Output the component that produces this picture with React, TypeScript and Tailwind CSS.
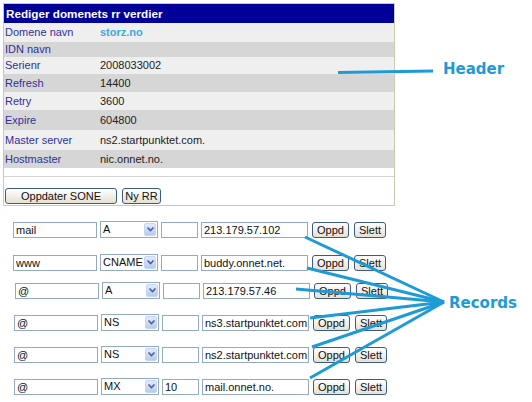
import React from "react";

const rows: { label: string; value: string; h: string; bg: string; special?: boolean }[] = [
  { label: "Domene navn", value: "storz.no", h: "h-[19px]", bg: "bg-[#efefef]", special: true },
  { label: "IDN navn", value: "", h: "h-[15px]", bg: "bg-[#d6d6d6]" },
  { label: "Serienr", value: "2008033002", h: "h-[17px]", bg: "bg-[#efefef]" },
  { label: "Refresh", value: "14400", h: "h-[18px]", bg: "bg-[#d6d6d6]" },
  { label: "Retry", value: "3600", h: "h-[18px]", bg: "bg-[#efefef]" },
  { label: "Expire", value: "604800", h: "h-[20px]", bg: "bg-[#d6d6d6]" },
  { label: "Master server", value: "ns2.startpunktet.com.", h: "h-[20px]", bg: "bg-[#efefef]" },
  { label: "Hostmaster", value: "nic.onnet.no.", h: "h-[18px]", bg: "bg-[#d6d6d6]" },
];

const records: { name: string; type: string; ttl: string; data: string; cls: string }[] = [
  { name: "mail", type: "A", ttl: "", data: "213.179.57.102", cls: "mt-[16px] pl-[13px]" },
  { name: "www", type: "CNAME", ttl: "", data: "buddy.onnet.net.", cls: "mt-[17px] pl-[13px]" },
  { name: "@", type: "A", ttl: "", data: "213.179.57.46", cls: "mt-[12px] pl-[15px]" },
  { name: "@", type: "NS", ttl: "", data: "ns3.startpunktet.com", cls: "mt-[16px] pl-[14px]" },
  { name: "@", type: "NS", ttl: "", data: "ns2.startpunktet.com", cls: "mt-[16px] pl-[14px]" },
  { name: "@", type: "MX", ttl: "10", data: "mail.onnet.no.", cls: "mt-[16px] pl-[14px]" },
];

function XpButton({ label, w }: { label: string; w: string }) {
  return (
    <div
      className={`${w} h-[16px] shrink-0 border border-[#3c5a86] rounded-[3px] bg-linear-to-b from-white to-[#e4e1d4] text-[11px] leading-none flex items-center justify-center text-[#111]`}
    >
      {label}
    </div>
  );
}

function Field({ value, w }: { value: string; w: string }) {
  return (
    <div
      className={`${w} h-[16px] shrink-0 border border-[#94aac4] bg-white text-[11px] leading-none flex items-center pl-[2px] overflow-hidden whitespace-nowrap text-[#111]`}
    >
      {value}
    </div>
  );
}

function Combo({ value }: { value: string }) {
  return (
    <div className="w-[58px] h-[17px] shrink-0 border border-[#94aac4] bg-white flex items-start -mt-[1px]">
      <div className="flex-1 min-w-0 pl-[2px] pt-[1px] text-[11px] leading-[13px] text-[#111] whitespace-nowrap">
        {value}
      </div>
      <div className="w-[12px] h-[13px] mt-[1px] mr-[1px] shrink-0 rounded-[2px] border border-[#c4d4f4] bg-linear-to-b from-[#e2ebfd] to-[#b4cbf5] flex items-center justify-center">
        <svg width="9" height="7" viewBox="0 0 9 7">
          <path d="M1.5 1.5 L4.5 4.5 L7.5 1.5" fill="none" stroke="#4d6185" strokeWidth="1.6" />
        </svg>
      </div>
    </div>
  );
}

export default function App() {
  return (
    <div
      className="relative w-[532px] h-[402px] bg-white overflow-hidden"
      style={{ fontFamily: '"Liberation Sans", Arial, sans-serif' }}
    >
      <div className="ml-[3px] mt-[3px] w-[392px] h-[203px] border border-[#cfc8ae] flex flex-col">
        <div className="h-[19px] bg-[#000099] text-white font-bold text-[11.7px] flex items-center pl-[2px]">
          Rediger domenets rr verdier
        </div>
        {rows.map((r) => (
          <div key={r.label} className={`${r.h} ${r.bg} flex items-center text-[11px]`}>
            <div className="w-[96px] pl-[1px] text-[#30309c]">{r.label}</div>
            <div className={r.special ? "font-bold text-[#3aa9de]" : "text-[#222]"}>{r.value}</div>
          </div>
        ))}
        <div className="h-[9px] border-b border-[#d4d4d4]" />
        <div className="flex gap-[5px] pl-[1px] mt-[11px]">
          <XpButton label="Oppdater SONE" w="w-[112px]" />
          <XpButton label="Ny RR" w="w-[39px]" />
        </div>
      </div>

      <div className="flex flex-col">
        {records.map((r, i) => (
          <div key={i} className={`flex items-start h-[16px] ${r.cls}`}>
            <Field value={r.name} w="w-[84px]" />
            <div className="w-[3px]" />
            <Combo value={r.type} />
            <div className="w-[3px]" />
            <Field value={r.ttl} w="w-[37px]" />
            <div className="w-[3px]" />
            <Field value={r.data} w="w-[107px]" />
            <div className="w-[4px]" />
            <XpButton label="Oppd" w="w-[37px]" />
            <div className="w-[5px]" />
            <XpButton label="Slett" w="w-[32px]" />
          </div>
        ))}
      </div>

      <div
        className="absolute left-[443px] top-[62px] text-[15px] font-bold text-[#1e9ad6] leading-none"
        style={{ fontFamily: '"DejaVu Sans", Verdana, sans-serif' }}
      >
        Header
      </div>
      <div
        className="absolute left-[449px] top-[296px] text-[15px] font-bold text-[#1e9ad6] leading-none"
        style={{ fontFamily: '"DejaVu Sans", Verdana, sans-serif' }}
      >
        Records
      </div>

      <svg className="absolute inset-0 pointer-events-none" width="532" height="402" viewBox="0 0 532 402">
        <g stroke="#1e9ad6" strokeWidth="3" fill="none">
          <line x1="338" y1="72.5" x2="433" y2="71" />
          <line x1="305" y1="237" x2="444" y2="302" />
          <line x1="307" y1="268" x2="444" y2="302" />
          <line x1="296" y1="289" x2="444" y2="302" />
          <line x1="310" y1="318" x2="444" y2="302" />
          <line x1="312" y1="347" x2="444" y2="302" />
          <line x1="310" y1="378" x2="444" y2="302" />
        </g>
      </svg>
    </div>
  );
}
